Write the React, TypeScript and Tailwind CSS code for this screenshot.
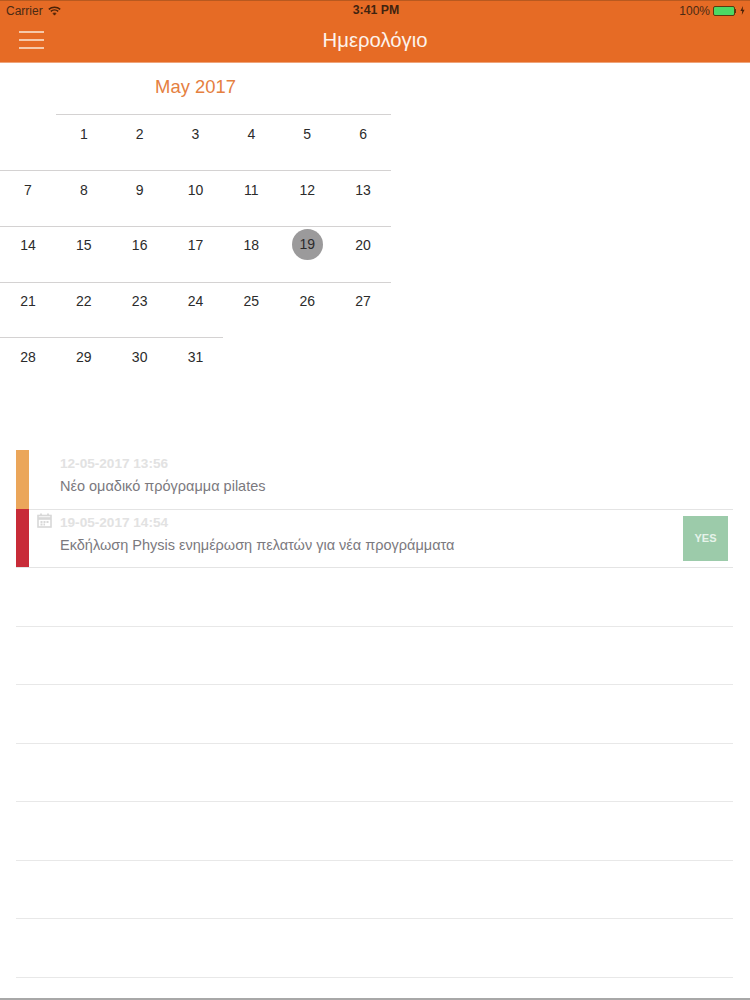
const weeks: (number | null)[][] = [
  [null, 1, 2, 3, 4, 5, 6],
  [7, 8, 9, 10, 11, 12, 13],
  [14, 15, 16, 17, 18, 19, 20],
  [21, 22, 23, 24, 25, 26, 27],
  [28, 29, 30, 31, null, null, null],
];

const emptyRows = [0, 1, 2, 3, 4, 5, 6];

function WifiIcon() {
  return (
    <svg width="13" height="10" viewBox="0 0 13 10" className="ml-[5px]" fill="none" stroke="#4a2208">
      <path d="M0.8 3.4C4 0.4 9 0.4 12.2 3.4" strokeWidth="1.5" />
      <path d="M2.8 5.4C4.9 3.6 8.1 3.6 10.2 5.4" strokeWidth="1.5" />
      <path d="M4.9 7.4C5.8 6.7 7.2 6.7 8.1 7.4L6.5 9.2Z" fill="#4a2208" strokeWidth="0.6" />
    </svg>
  );
}

function Battery() {
  return (
    <div className="flex items-center ml-[3px]">
      <div className="w-[22px] h-[10px] rounded-[2px] border border-[#5a3a10] bg-[#4cd964]" />
      <div className="w-[1px] h-[4px] bg-[#5a3a10]" />
      <svg width="5" height="9" viewBox="0 0 5 9" className="ml-[4px]">
        <path d="M3 0L0.4 5H2.2L1.8 9L4.6 3.8H2.7Z" fill="#4a2208" />
      </svg>
    </div>
  );
}

function StatusBar() {
  return (
    <div className="h-[20px] flex items-center justify-between pl-[6px] pr-[5px] text-[12px] text-[#4a2a14] border-t border-[#b8591f]">
      <div className="flex flex-1 items-center">
        <span>Carrier</span>
        <WifiIcon />
      </div>
      <span className="ml-[1px] text-[12.3px] font-bold text-[#3f2310]">3:41 PM</span>
      <div className="flex flex-1 items-center justify-end">
        <span>100%</span>
        <Battery />
      </div>
    </div>
  );
}

function NavBar() {
  return (
    <div className="relative h-[42px] flex items-center justify-center">
      <div className="absolute left-[19px] top-[11px] flex flex-col gap-[6px]">
        <div className="w-[25px] h-[2px] bg-[#f6c9aa]" />
        <div className="w-[25px] h-[2px] bg-[#f6c9aa]" />
        <div className="w-[25px] h-[2px] bg-[#f6c9aa]" />
      </div>
      <span className="text-[20.3px] leading-[24px] -mt-[3px] text-[#fdf3ec]">Ημερολόγιο</span>
    </div>
  );
}

function Calendar() {
  return (
    <div className="w-[391px]">
      <div className="h-[51.3px] flex items-center justify-center text-[18.4px] text-[#e5803f] pb-[3px]">May 2017</div>
      <div className="flex flex-col">
        {weeks.map((week, i) => (
          <div key={i} className="grid grid-cols-7 h-[55.75px]">
            {week.map((day, j) => (
              <div key={j} className={day ? "border-t border-[#d4d2d2] flex justify-center" : "flex justify-center"}>
                {day === 19 ? (
                  <span className="mt-[2.5px] w-[31px] h-[31px] rounded-full bg-[#9b9a9b] flex items-center justify-center text-[14px] text-[#2b2b2b]">
                    {day}
                  </span>
                ) : (
                  day && <span className="mt-[9.5px] text-[14px] leading-[18px] text-[#2b2b2b]">{day}</span>
                )}
              </div>
            ))}
          </div>
        ))}
      </div>
    </div>
  );
}

function EventRow({
  bar,
  date,
  title,
  calendar,
  yes,
}: {
  bar: string;
  date: string;
  title: string;
  calendar?: boolean;
  yes?: boolean;
}) {
  return (
    <div className="flex h-[58.5px] border-b border-[#e4e4e4]">
      <div className={`w-[13px] shrink-0 -mt-px ${bar}`} />
      <div className="w-[31px] shrink-0 flex justify-center pt-[3px]">
        {calendar && (
          <svg width="15" height="15" viewBox="0 0 15 15" fill="none" stroke="#d8d8d8">
            <rect x="1" y="2.5" width="13" height="11.5" strokeWidth="1.6" />
            <path d="M1 5.5H14" strokeWidth="2.6" />
            <path d="M4 0.5V3M11 0.5V3" strokeWidth="1.8" />
            <path d="M3.5 9H11.5M3.5 11.5H8" strokeWidth="1.8" strokeDasharray="2 1" />
          </svg>
        )}
      </div>
      <div className="flex-1">
        <div className="mt-[5px] text-[13.6px] leading-[16px] font-bold text-[#e2e2e2]">{date}</div>
        <div className="mt-[5px] text-[14.5px] leading-[18px] text-[#7b797e]">{title}</div>
      </div>
      {yes && (
        <div className="w-[45px] h-[45px] mt-[6px] mr-[5px] bg-[#9ccbaa] flex items-center justify-center text-[11px] font-bold text-[#e6f3ea]">
          YES
        </div>
      )}
    </div>
  );
}

export default function App() {
  return (
    <div className="w-[750px] h-[1000px] overflow-hidden bg-white flex flex-col font-['Liberation_Sans',Arial,sans-serif]">
      <div className="h-[63px] shrink-0 bg-[#e66b25] border-b border-[#efa47a]">
        <StatusBar />
        <NavBar />
      </div>
      <Calendar />
      <div className="mt-[58px] ml-[16px] w-[717px] flex flex-col">
        <EventRow bar="bg-[#eba65a]" date="12-05-2017 13:56" title="Νέο ομαδικό πρόγραμμα pilates" />
        <EventRow
          bar="bg-[#c82b38]"
          date="19-05-2017 14:54"
          title="Εκδήλωση Physis ενημέρωση πελατών για νέα προγράμματα"
          calendar
          yes
        />
        {emptyRows.map((row) => (
          <div key={row} className="h-[58.5px] border-b border-[#e8e8e8]" />
        ))}
      </div>
      <div className="mt-auto h-[2px] bg-[#a8a8a8]" />
    </div>
  );
}
